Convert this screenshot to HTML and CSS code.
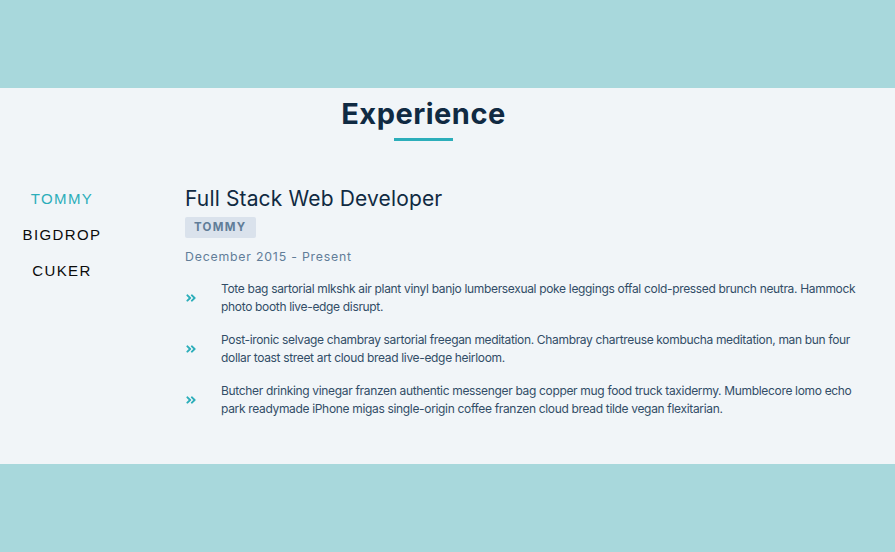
FILE: index.html
```html
<!DOCTYPE html>
<html lang="en">
<head>
<meta charset="utf-8">
<title>Experience</title>
<link rel="stylesheet" href="styles.css">
</head>
<body>
<div class="band"></div>
<section class="section">
  <div class="title">
    <h2>Experience</h2>
    <div class="underline"></div>
  </div>
  <div class="jobs">
    <div class="btn-container">
      <button class="job-btn active-btn">TOMMY</button>
      <button class="job-btn">BIGDROP</button>
      <button class="job-btn">CUKER</button>
    </div>
    <article class="job-info">
      <h3>Full Stack Web Developer</h3>
      <h4>TOMMY</h4>
      <p class="job-date">December 2015 - Present</p>
      <div class="job-desc">
        <svg class="job-icon" viewBox="0 0 448 512" aria-hidden="true"><path d="M224.3 273l-136 136c-9.4 9.4-24.6 9.4-33.9 0l-22.6-22.6c-9.4-9.4-9.4-24.6 0-33.9l96.4-96.4-96.4-96.4c-9.4-9.4-9.4-24.6 0-33.9L54.3 103c9.4-9.4 24.6-9.4 33.9 0l136 136c9.5 9.4 9.5 24.6.1 34zm192-34l-136-136c-9.4-9.4-24.6-9.4-33.9 0l-22.6 22.6c-9.4 9.4-9.4 24.6 0 33.9l96.4 96.4-96.4 96.4c-9.4 9.4-9.4 24.6 0 33.9l22.6 22.6c9.4 9.4 24.6 9.4 33.9 0l136-136c9.4-9.2 9.4-24.4 0-33.8z"/></svg>
        <p>Tote bag sartorial mlkshk air plant vinyl banjo lumbersexual poke leggings offal cold-pressed brunch neutra. Hammock photo booth live-edge disrupt.</p>
      </div>
      <div class="job-desc">
        <svg class="job-icon" viewBox="0 0 448 512" aria-hidden="true"><path d="M224.3 273l-136 136c-9.4 9.4-24.6 9.4-33.9 0l-22.6-22.6c-9.4-9.4-9.4-24.6 0-33.9l96.4-96.4-96.4-96.4c-9.4-9.4-9.4-24.6 0-33.9L54.3 103c9.4-9.4 24.6-9.4 33.9 0l136 136c9.5 9.4 9.5 24.6.1 34zm192-34l-136-136c-9.4-9.4-24.6-9.4-33.9 0l-22.6 22.6c-9.4 9.4-9.4 24.6 0 33.9l96.4 96.4-96.4 96.4c-9.4 9.4-9.4 24.6 0 33.9l22.6 22.6c9.4 9.4 24.6 9.4 33.9 0l136-136c9.4-9.2 9.4-24.4 0-33.8z"/></svg>
        <p>Post-ironic selvage chambray sartorial freegan meditation. Chambray chartreuse kombucha meditation, man bun four dollar toast street art cloud bread live-edge heirloom.</p>
      </div>
      <div class="job-desc">
        <svg class="job-icon" viewBox="0 0 448 512" aria-hidden="true"><path d="M224.3 273l-136 136c-9.4 9.4-24.6 9.4-33.9 0l-22.6-22.6c-9.4-9.4-9.4-24.6 0-33.9l96.4-96.4-96.4-96.4c-9.4-9.4-9.4-24.6 0-33.9L54.3 103c9.4-9.4 24.6-9.4 33.9 0l136 136c9.5 9.4 9.5 24.6.1 34zm192-34l-136-136c-9.4-9.4-24.6-9.4-33.9 0l-22.6 22.6c-9.4 9.4-9.4 24.6 0 33.9l96.4 96.4-96.4 96.4c-9.4 9.4-9.4 24.6 0 33.9l22.6 22.6c9.4 9.4 24.6 9.4 33.9 0l136-136c9.4-9.2 9.4-24.4 0-33.8z"/></svg>
        <p>Butcher drinking vinegar franzen authentic messenger bag copper mug food truck taxidermy. Mumblecore lomo echo park readymade iPhone migas single-origin coffee franzen cloud bread tilde vegan flexitarian.</p>
      </div>
    </article>
  </div>
</section>
<div class="band band-bottom"></div>
</body>
</html>
```

FILE: styles.css
```css
* { box-sizing: border-box; margin: 0; padding: 0; }
html, body { height: 100%; }
body {
  background: #a8d8dc;
  font-family: Inter, "Noto Sans", sans-serif;
  color: #102a42;
}
.band { height: 88px; }
.section {
  background: #f1f5f8;
  height: 376px;
  padding-top: 7px;
}
.title {
  width: 847px;
  display: flex;
  flex-direction: column;
  align-items: center;
}
.title h2 {
  font-size: 29px;
  font-weight: 700;
  letter-spacing: 0.5px;
  color: #102a42;
  line-height: 38px;
}
.underline {
  width: 59px;
  height: 3px;
  background: #2caeba;
  margin-top: 5px;
}
.jobs {
  display: flex;
  margin-top: 45px;
}
.btn-container {
  width: 124px;
  flex: none;
  display: flex;
  flex-direction: column;
  align-items: center;
  gap: 14px;
  padding-top: 2px;
}
.job-btn {
  background: transparent;
  border: none;
  font-family: "Liberation Sans", Arial, sans-serif;
  font-size: 15px;
  letter-spacing: 1.4px;
  color: #0b0b0b;
  line-height: 22px;
  cursor: pointer;
}
.job-btn.active-btn { color: #2caeba; }
.job-info {
  margin-left: 61px;
  width: 680px;
}
.job-info h3 {
  font-size: 21px;
  font-weight: 400;
  letter-spacing: 0.15px;
  color: #102a42;
  line-height: 26px;
}
.job-info h4 {
  display: inline-block;
  margin-top: 5px;
  background: #dae2ec;
  color: #617d98;
  font-size: 11.5px;
  font-weight: 700;
  letter-spacing: 1.3px;
  padding: 0 9px;
  line-height: 21px;
  border-radius: 2px;
}
.job-date {
  margin-top: 10px;
  font-size: 12.3px;
  letter-spacing: 0.8px;
  color: #617d98;
  line-height: 18px;
}
.job-desc {
  display: flex;
  align-items: center;
  margin-top: 15px;
}
.job-date + .job-desc { margin-top: 14px; }
.job-icon {
  width: 12px;
  height: 12px;
  fill: #2caeba;
  flex: none;
  margin-right: 24px;
}
.job-desc p {
  font-size: 12px;
  letter-spacing: -0.33px;
  line-height: 18px;
  color: #324d67;
}
```
